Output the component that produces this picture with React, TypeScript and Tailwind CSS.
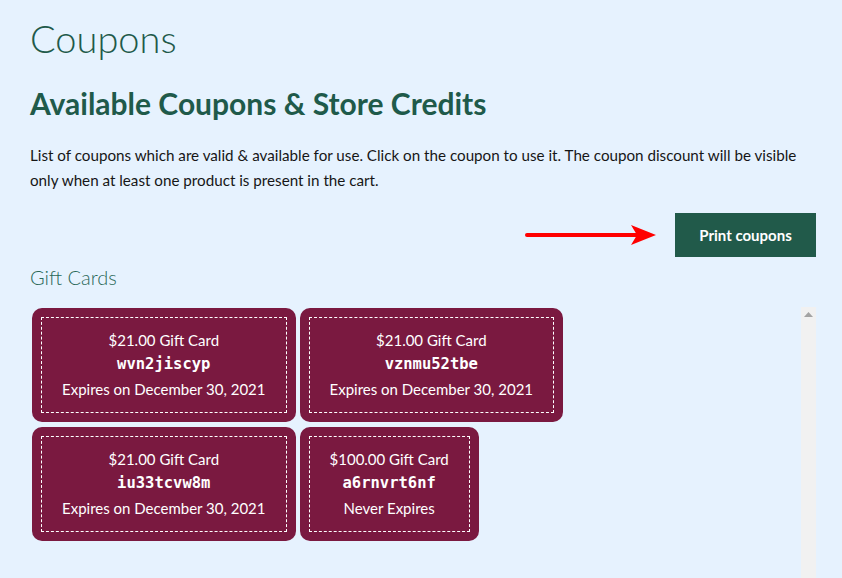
const cards = [
  { title: '$21.00 Gift Card', code: 'wvn2jiscyp', expiry: 'Expires on December 30, 2021' },
  { title: '$21.00 Gift Card', code: 'vznmu52tbe', expiry: 'Expires on December 30, 2021' },
  { title: '$21.00 Gift Card', code: 'iu33tcvw8m', expiry: 'Expires on December 30, 2021' },
  { title: '$100.00 Gift Card', code: 'a6rnvrt6nf', expiry: 'Never Expires' },
];

function ArrowPointer() {
  return (
    <svg width="132" height="24" viewBox="0 0 132 24" className="block">
      <line x1="2" y1="12" x2="112" y2="12" stroke="#ff0000" strokeWidth="4" strokeLinecap="round" />
      <path d="M106 2 L131 12 L106 22 L112 12 Z" fill="#ff0000" />
    </svg>
  );
}

export default function App() {
  return (
    <div className="h-[578px] w-full bg-[#e6f2fe] overflow-hidden font-['Lato',sans-serif] text-[#111]">
      <div className="pl-[30px] pr-[26px] pt-[14px]">
        <h1 className="text-[38px] font-light leading-[48px] text-[#1f5a4a]">Coupons</h1>

        <h2 className="mt-[24px] text-[30px] font-bold leading-[34px] text-[#1f5a4a]">
          Available Coupons &amp; Store Credits
        </h2>

        <p className="mt-[23px] text-[15.2px] leading-[25px] text-[#161616]">
          List of coupons which are valid &amp; available for use. Click on the coupon to use it. The coupon discount will be visible only when at least one product is present in the cart.
        </p>

        <div className="mt-[20px] flex items-center justify-end gap-[18px]">
          <ArrowPointer />
          <button className="h-[44px] w-[141px] bg-[#215a4a] text-[15px] font-bold text-white">
            Print coupons
          </button>
        </div>

        <h3 className="mt-[6px] text-[20px] font-light leading-[28px] text-[#2a6858]">Gift Cards</h3>

        <div className="mt-[16px] flex">
          <div className="flex w-[770px] flex-wrap content-start gap-x-[4px] gap-y-[5px] pl-[2px] pt-[1px]">
            {cards.map((c) => (
              <div key={c.code} className="rounded-[10px] bg-[#7a1940] p-[9px] text-white">
                <div className="flex flex-col items-center border border-dashed border-white px-[20px] pb-[12px] pt-[11px]">
                  <div className="text-[15px] leading-[22px]">{c.title}</div>
                  <div className="mt-[2px] font-['DejaVu_Sans_Mono',monospace] text-[15.5px] font-bold leading-[22px]">
                    {c.code}
                  </div>
                  <div className="mt-[3px] text-[15px] leading-[22px]">{c.expiry}</div>
                </div>
              </div>
            ))}
          </div>
          <div className="ml-auto flex h-[272px] w-[15px] flex-col items-center bg-[#f1f1f1] pt-[5px]">
            <svg width="9" height="5" viewBox="0 0 9 5">
              <path d="M4.5 0 L9 5 L0 5 Z" fill="#a3a3a3" />
            </svg>
          </div>
        </div>
      </div>
    </div>
  );
}
